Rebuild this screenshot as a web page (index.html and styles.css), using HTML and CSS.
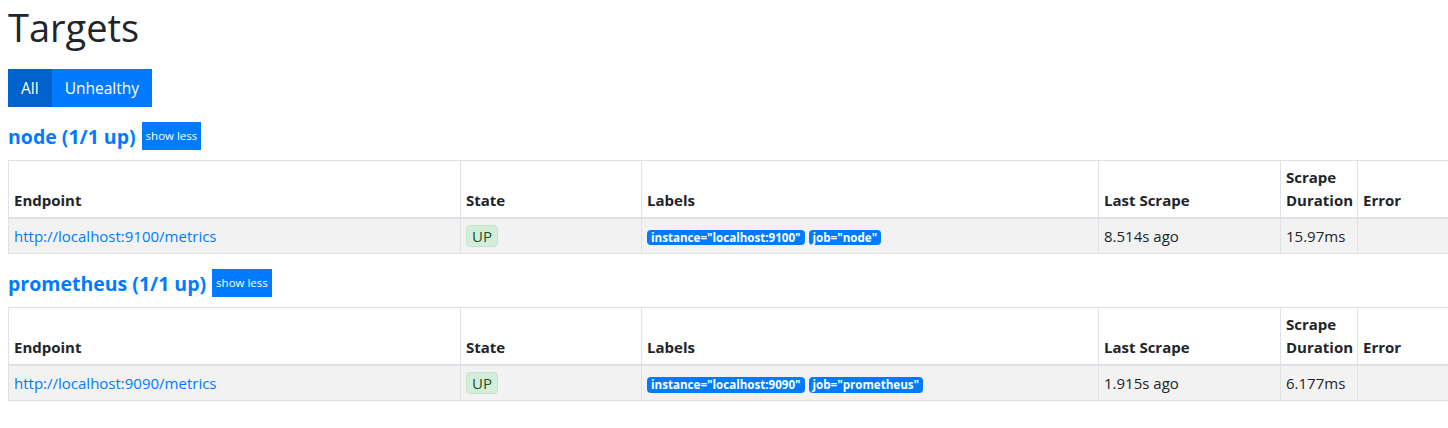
FILE: index.html
```html
<!DOCTYPE html>
<html lang="en">
<head>
  <meta charset="UTF-8">
  <title>Prometheus - Targets</title>
  <link rel="stylesheet" href="styles.css">
</head>
<body>
  <div class="container">
    <h1>Targets</h1>
    <div class="btn-group">
      <button type="button" class="btn active">All</button>
      <button type="button" class="btn">Unhealthy</button>
    </div>

    <div class="pool">
      <div class="pool-head">
        <a href="#node" class="pool-title">node (1/1 up)</a>
        <button type="button" class="btn-small">show less</button>
      </div>
      <table class="targets">
        <thead>
          <tr>
            <th class="col-endpoint">Endpoint</th>
            <th class="col-state">State</th>
            <th class="col-labels">Labels</th>
            <th class="col-last">Last Scrape</th>
            <th class="col-duration">Scrape Duration</th>
            <th class="col-error">Error</th>
          </tr>
        </thead>
        <tbody>
          <tr>
            <td><a href="#">http://localhost:9100/metrics</a></td>
            <td><span class="state-up">UP</span></td>
            <td>
              <span class="label">instance="localhost:9100"</span>
              <span class="label">job="node"</span>
            </td>
            <td>8.514s ago</td>
            <td>15.97ms</td>
            <td></td>
          </tr>
        </tbody>
      </table>
    </div>

    <div class="pool">
      <div class="pool-head">
        <a href="#prometheus" class="pool-title">prometheus (1/1 up)</a>
        <button type="button" class="btn-small">show less</button>
      </div>
      <table class="targets">
        <thead>
          <tr>
            <th class="col-endpoint">Endpoint</th>
            <th class="col-state">State</th>
            <th class="col-labels">Labels</th>
            <th class="col-last">Last Scrape</th>
            <th class="col-duration">Scrape Duration</th>
            <th class="col-error">Error</th>
          </tr>
        </thead>
        <tbody>
          <tr>
            <td><a href="#">http://localhost:9090/metrics</a></td>
            <td><span class="state-up">UP</span></td>
            <td>
              <span class="label">instance="localhost:9090"</span>
              <span class="label">job="prometheus"</span>
            </td>
            <td>1.915s ago</td>
            <td>6.177ms</td>
            <td></td>
          </tr>
        </tbody>
      </table>
    </div>
  </div>
</body>
</html>
```

FILE: styles.css
```css
body {
  font-family: 'Open Sans', sans-serif;
  font-size: 15px;
  line-height: 1.5;
  color: #212529;
  background: #fff;
  margin: 0;
  overflow-x: hidden;
}

a {
  color: #007bff;
  text-decoration: none;
}

.container {
  padding: 0 8px;
}

h1 {
  font-size: 38px;
  font-weight: 500;
  line-height: 1.2;
  margin: 5px 0 18px;
}

.btn-group {
  display: flex;
}

.btn {
  font-family: inherit;
  font-size: 15.5px;
  line-height: 24px;
  padding: 7px 13px;
  border: none;
  border-radius: 0;
  background: #007bff;
  color: #fff;
}

.btn.active {
  background: #0062cc;
}

.pool + .pool {
  margin-top: 4px;
}

.pool-head {
  display: flex;
  align-items: center;
  gap: 6px;
  margin: 15px 0 9px;
}

.pool-title {
  font-size: 19.5px;
  font-weight: bold;
}

.btn-small {
  font-family: inherit;
  font-size: 11.5px;
  line-height: 18px;
  padding: 5px 4px;
  border: none;
  background: #007bff;
  color: #fff;
}

.targets {
  border-collapse: collapse;
  table-layout: fixed;
  width: 1500px;
}

.targets th,
.targets td {
  border: 1px solid #dee2e6;
  padding: 5px;
  text-align: left;
}

.targets th {
  vertical-align: bottom;
  font-weight: bold;
  line-height: 23px;
  border-bottom-width: 2px;
}

.targets td {
  vertical-align: middle;
  line-height: 24px;
}

.targets tbody tr {
  background: #f2f2f2;
}

.col-endpoint { width: 441px; }
.col-state { width: 170px; }
.col-labels { width: 446px; }
.col-last { width: 171px; }
.col-duration { width: 66px; }
.col-error { width: 140px; }

.state-up {
  display: inline-block;
  padding: 0 5px;
  line-height: 20px;
  background: #d4edda;
  color: #155724;
  border: 1px solid #c3e6cb;
  border-radius: 4px;
}

.label {
  display: inline-block;
  font-size: 11.6px;
  font-weight: bold;
  line-height: 1;
  padding: 2px 4px;
  color: #fff;
  background: #007bff;
  border-radius: 4px;
}
```
